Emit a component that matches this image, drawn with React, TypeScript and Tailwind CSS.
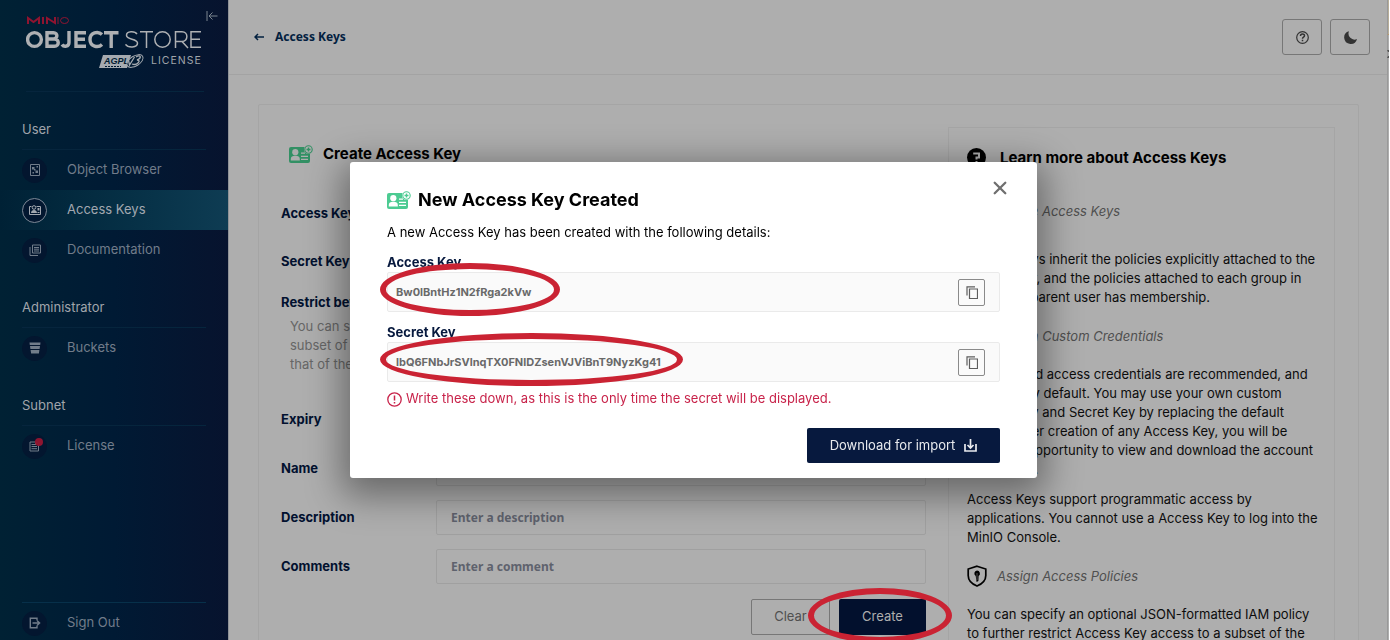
import React from "react";

function KeyCardIcon({ className, fill, bg }: { className: string; fill: string; bg: string }) {
  return (
    <svg className={className} viewBox="0 0 24 18" aria-hidden="true">
      <rect x="0" y="2" width="21" height="16" rx="2" fill={fill} />
      <circle cx="6.3" cy="7.2" r="3.1" fill={bg} />
      <path d="M1.800 15.600v-1.800c0-2 1.600-3 4.500-3s4.500 1 4.500 3v1.800z" fill={bg} />
      <path d="M12 8.200h4M12 11.300h7M12 14.400h7" stroke={bg} strokeWidth="1.300" />
      <circle cx="19.500" cy="4.500" r="4.500" fill={bg} />
      <circle cx="19.500" cy="4.500" r="3.700" fill="none" stroke={fill} strokeWidth="1.100" />
      <path d="M19.500 2.500v4M17.500 4.500h4" stroke={fill} strokeWidth="1.400" />
    </svg>
  );
}

function Logo() {
  return (
    <svg className="block h-[54px] w-[178px]" viewBox="0 0 178 54" role="img" aria-label="MinIO Object Store, AGPL v3 license">
      <g fill="none" stroke="#8f1430" strokeWidth="2">
        <path d="M2 8V2l5.500 4L13 2v6M17 1v7M21 8V2l8 5V1" />
        <path d="M32 1v7" strokeWidth="1" />
        <ellipse cx="38.500" cy="4.500" rx="4" ry="3" strokeWidth="1" />
      </g>
      <g fill="none" stroke="#aeb0b3" strokeWidth="3.400">
        <circle cx="8.500" cy="23.500" r="6.900" />
        <path d="M21 16.700h6.500c4.500 0 4.500 6.300 0 6.300H21h7.500c5 0 5 7.300 0 7.300H21V15" />
        <path d="M36 28.500c2 3 7 2.200 7-2V15M60 16.700H50v13.600h10M50 23.300h9M76 18.500c-4-3.800-12-2-12 5s8 8.800 12 5M78 16.700h14.500M85.200 16.700V32" />
      </g>
      <g fill="none" stroke="#aeb0b3" strokeWidth="1.500">
        <path d="M111 18c-2-3-10.500-3.200-10.500 1.300 0 5 11 2.700 11 7.700 0 5-9.500 5-12 1.300M114 15.700h13M120.500 15.700V32" />
        <circle cx="136.500" cy="23.500" r="7.700" />
        <path d="M149.500 32V15.700h6.500c6.500 0 6.500 9.800 0 9.800h-6.500M156 25.500l6 6.500M175 15.700h-10v15.600h10M165 23.300h9" />
      </g>
      <path d="M77 39h28l-4 13H73z" fill="#a5aab0" />
      <text x="78" y="48" fontSize="9" fontStyle="italic" fontWeight="700" fontFamily="Liberation Sans, sans-serif" fill="#001b33">AGPL</text>
      <ellipse cx="109" cy="45" rx="9" ry="5" transform="rotate(-32 109 45)" fill="#001a33" stroke="#a5aab0" />
      <path d="M102 42l1.500 7 5-8M110 41c5-3 6 1 1 3 5 0 0 6-5 4" fill="none" stroke="#a5aab0" strokeWidth="1.300" />
      <path d="M79 50.500h16" stroke="#001b33" strokeWidth="1" strokeDasharray="2 1" />
      <text x="125" y="48" fontSize="10.500" letterSpacing="1" fontFamily="Inter, sans-serif" fill="#a0a5ab">LICENSE</text>
    </svg>
  );
}

const icons: Record<string, React.ReactNode> = {
  browser: (
    <>
      <path d="M1.500.500h9v11h-9z" fill="none" stroke="currentColor" />
      <path d="M3 3h2.500v2.500H3zM6.500 6.500H9V9H6.500zM3.500 8H5v1.500H3.500zM7.500 2H9v1.500H7.500zM5 5h1.500v1.500H5z" fill="currentColor" />
    </>
  ),
  keys: (
    <>
      <path d="M2.500 2.500h-2v8h11v-8h-4" fill="none" stroke="currentColor" />
      <circle cx="5" cy="3.500" r="1.800" fill="none" stroke="currentColor" />
      <path d="M2 9c0-4 6-4 6 0zM8.500 4h2v2.500h-2zM8.500 8h2v1h-2z" fill="currentColor" />
    </>
  ),
  docs: (
    <path d="M3.500 1h8v8h-8zM1 3v8.500h8M5 3.500h5M5 5.200h5M5 7h5" fill="none" stroke="currentColor" />
  ),
  bucket: (
    <path d="M.5.500h11l-.3 2.500H.8zM1 4h10l-.4 3H1.400zM1.600 8h8.800l-.5 3.500H2.100z" fill="currentColor" />
  ),
  license: (
    <path d="M7 2H1v9h8.500V5M2.500 4.500h5M2.500 6.500h5.500M2.500 8.700h5.500M6 4l3-3" fill="none" stroke="currentColor" />
  ),
  signout: (
    <path d="M8 3.500V1.300H1.300v9.400H8V8.500M3.500 6h7M8.200 3.700 10.600 6 8.200 8.300" fill="none" stroke="currentColor" strokeWidth="1.400" />
  ),
};

function NavItem({ icon, label, active, dot }: { icon: string; label: string; active?: boolean; dot?: boolean }) {
  return (
    <a
      href="#"
      className={
        active
          ? "flex h-10 items-center gap-5 bg-linear-to-r from-[#002135] to-[#0e3c53] pl-[22px] text-[#a2a8b0]"
          : "flex h-10 items-center gap-5 pl-[22px] text-[#717c8a]"
      }
    >
      <span
        className={
          active
            ? "relative flex size-[25px] items-center justify-center rounded-full border border-[#7d8896] bg-[#021730]"
            : "relative flex size-[25px] items-center justify-center rounded-full bg-[#03162f]"
        }
      >
        <svg className="size-3" viewBox="0 0 12 12" aria-hidden="true">{icons[icon]}</svg>
        {dot && <span className="absolute top-1 right-1 size-2 rounded-full bg-[#8e1530]" />}
      </span>
      {label}
    </a>
  );
}

function NavGroup({ title, children }: { title: string; children: React.ReactNode }) {
  return (
    <div>
      <div className="px-[22px] pt-[27px]">
        <h2 className="h-[31px] border-b border-[#06253d] leading-5 text-[#a0a5ab]">{title}</h2>
      </div>
      {children}
    </div>
  );
}

function Sidebar() {
  return (
    <aside className="flex w-[229px] shrink-0 flex-col border-r border-[#8f9296] bg-linear-to-r from-[#002134] via-[#001a34] to-[#07132e] text-[13px]">
      <div className="relative pt-4 pr-6 pl-[26px]">
        <div className="h-[76px] border-b border-[#06253d]">
          <Logo />
        </div>
        <button aria-label="Collapse menu" className="absolute top-[11px] right-[10px] text-[#7b8590]">
          <svg className="block h-[10px] w-3" viewBox="0 0 12 10" fill="none" stroke="currentColor">
            <path d="M1 0v10M11.500 5H3M6.500 1.500 3 5l3.500 3.500" />
          </svg>
        </button>
      </div>
      <nav className="flex flex-1 flex-col">
        <NavGroup title="User">
          <NavItem icon="browser" label="Object Browser" />
          <NavItem icon="keys" label="Access Keys" active />
          <NavItem icon="docs" label="Documentation" />
        </NavGroup>
        <NavGroup title="Administrator">
          <NavItem icon="bucket" label="Buckets" />
        </NavGroup>
        <NavGroup title="Subnet">
          <NavItem icon="license" label="License" dot />
        </NavGroup>
        <div className="mt-auto -mb-[3px]">
          <div className="mx-[22px] border-t border-[#07304a]" />
          <NavItem icon="signout" label="Sign Out" />
        </div>
      </nav>
    </aside>
  );
}

function Row({ id, label, placeholder }: { id: string; label: string; placeholder?: string }) {
  return (
    <div className="flex items-center">
      <label htmlFor={id} className="w-[155px] shrink-0 font-bold text-[#02112f]">{label}</label>
      <input
        id={id}
        placeholder={placeholder}
        className="h-[35px] min-w-0 flex-1 rounded-xs border border-[#a0a0a0] bg-transparent px-[14px] font-[Noto_Sans,sans-serif] text-xs font-bold placeholder:text-[#5e626d]"
      />
    </div>
  );
}

function Ring({ className }: { className: string }) {
  return <span aria-hidden="true" className={`pointer-events-none absolute z-10 rounded-[50%] border-[6px] border-[#ca2333] ${className}`} />;
}

function HelpHeading({ children }: { children: React.ReactNode }) {
  return (
    <h3 className="flex h-[58px] items-center gap-[10px] text-[#505050] italic">
      <svg className="h-[22px] w-5 shrink-0 text-black" viewBox="0 0 20 22" aria-hidden="true">
        <path d="M10 1.200 18.800 4v6.500c0 5-3.800 8.500-8.800 10.500C5 19 1.200 15.500 1.200 10.500V4z" fill="none" stroke="currentColor" strokeWidth="1.700" />
        <path d="M10 5.500a3 3 0 0 1 1.600 5.500l-.2 5L9.600 17l-.9-6A3 3 0 0 1 10 5.500" fill="currentColor" />
        <path d="M10 8v7" stroke="#777" strokeWidth=".7" />
      </svg>
      {children}
    </h3>
  );
}

function CreateForm() {
  return (
    <form className="min-w-0 flex-1 pt-[15px]" onSubmit={(e) => e.preventDefault()}>
      <h1 className="flex h-6 items-center gap-[10px] pl-2 text-[15px] font-bold text-black">
        <KeyCardIcon className="h-[18px] w-6" fill="#329064" bg="#aeaeae" />
        Create Access Key
      </h1>
      <div className="mt-[30px] flex flex-col gap-[13px]">
        <Row id="access" label="Access Key" />
        <Row id="secret" label="Secret Key" />
      </div>
      <div className="mt-[13px]">
        <h2 className="leading-5 font-bold text-[#02112f]">Restrict beyond user policy</h2>
        <p className="mt-[5px] pl-[9px] leading-[19px] text-[#666]">
          You can specify an optional JSON-formatted IAM policy to further restrict Access Key access to a
          subset of the actions and resources explicitly allowed for the parent user. Additional access beyond
          that of the parent user cannot be implemented through these policies.
        </p>
      </div>
      <div className="mt-7 flex flex-col gap-[14px]">
        <Row id="expiry" label="Expiry" />
        <Row id="name" label="Name" placeholder="Enter a name" />
        <Row id="description" label="Description" placeholder="Enter a description" />
        <Row id="comments" label="Comments" placeholder="Enter a comment" />
      </div>
      <div className="mt-[15px] flex justify-end gap-[9px]">
        <button type="reset" className="h-[36px] w-[79px] rounded-xs border border-[#777] text-[#505050]">Clear</button>
        <div className="relative">
          <button type="submit" className="h-[36px] w-[87px] rounded-xs bg-[#02102d] text-[#aeaeae]">Create</button>
          <Ring className="-top-[11px] -left-[31px] h-[55px] w-[144px]" />
        </div>
      </div>
    </form>
  );
}

function HelpPanel() {
  return (
    <section className="w-[387px] shrink-0 border border-[#a5a5a5] pt-[17px] pr-[11px] pl-[18px] leading-[19px] text-[#0c0c0c]">
      <h2 className="flex h-6 items-center gap-[14px] text-[15px] font-bold text-black">
        <svg className="size-[19px]" viewBox="0 0 19 19" aria-hidden="true">
          <circle cx="9.500" cy="9.500" r="9.500" />
          <path d="M6.200 5.500h5.800v4H9.500v2M8.500 14h2" fill="none" stroke="#aeaeae" strokeWidth="2" />
        </svg>
        Learn more about Access Keys
      </h2>
      <div className="mt-[13px]">
        <HelpHeading>Create Access Keys</HelpHeading>
        <p className="mt-[10px]">
          Access Keys inherit the policies explicitly attached to the parent user, and the policies attached to
          each group in which the parent user has membership.
        </p>
        <HelpHeading>Assign Custom Credentials</HelpHeading>
        <p>
          Randomized access credentials are recommended, and provided by default. You may use your own custom
          Access Key and Secret Key by replacing the default values. After creation of any Access Key, you will be
          given the opportunity to view and download the account credentials.
        </p>
        <p className="mt-[11px]">
          Access Keys support programmatic access by applications. You cannot use a Access Key to log into the
          MinIO Console.
        </p>
        <HelpHeading>Assign Access Policies</HelpHeading>
        <p>
          You can specify an optional JSON-formatted IAM policy to further restrict Access Key access to a subset
          of the actions and resources explicitly allowed for the parent user.
        </p>
      </div>
    </section>
  );
}

function KeyField({ label, value, ring }: { label: string; value: string; ring: string }) {
  return (
    <div>
      <h3 className="h-5 leading-5 font-bold text-[#07193e]">{label}</h3>
      <div className="relative flex h-10 items-center justify-between rounded-xs border border-[#eaeaea] bg-[#fafafa] pr-[14px] pl-2">
        <span className="text-[11px] font-bold text-[#696969]">{value}</span>
        <button aria-label={`Copy ${label}`} className="flex size-[27px] items-center justify-center rounded-xs border border-[#8a8a8a] text-[#5e5e5e]">
          <svg className="h-[13px] w-3" viewBox="0 0 12 13" fill="none" stroke="currentColor">
            <path d="M3.500 3h8v9.500h-8zM1 9.500V.800h8" strokeWidth="1.200" />
          </svg>
        </button>
        <Ring className={ring} />
      </div>
    </div>
  );
}

function Dialog() {
  return (
    <div className="fixed inset-y-0 right-[3px] left-0 flex items-center justify-center">
      <div role="dialog" aria-modal="true" aria-labelledby="dialog-title" className="relative w-[687px] rounded-[3px] bg-white px-[37px] pt-[26px] pb-[15px] text-[13px] shadow-[0_10px_36px_8px_rgba(0,0,0,0.4)]">
        <h2 id="dialog-title" className="flex h-6 items-center gap-[7px] text-lg font-bold text-black">
          <KeyCardIcon className="h-[18px] w-6" fill="#4ccb92" bg="#ffffff" />
          New Access Key Created
        </h2>
        <button aria-label="Close" className="absolute top-[19px] right-[30px] text-[#6f6f6f]">
          <svg className="block size-[14px]" viewBox="0 0 14 14" stroke="currentColor" strokeWidth="2.300" strokeLinecap="round">
            <path d="M1.700 1.700 12.300 12.300M12.300 1.700 1.700 12.300" />
          </svg>
        </button>
        <p className="mt-[10px] leading-5 text-black">A new Access Key has been created with the following details:</p>
        <div className="mt-[10px] flex flex-col gap-[10px]">
          <KeyField label="Access Key" value="Bw0lBntHz1N2fRga2kVw" ring="-top-[10px] -left-[8px] h-[53px] w-[180px]" />
          <KeyField label="Secret Key" value="lbQ6FNbJrSVlnqTX0FNlDZsenVJViBnT9NyzKg41" ring="-top-[10px] -left-[8px] h-[53px] w-[303px]" />
        </div>
        <p className="mt-[7px] flex h-5 items-center gap-1 text-[#c8234a]">
          <svg className="size-[15px]" viewBox="0 0 15 15" fill="none" stroke="currentColor">
            <circle cx="7.500" cy="7.500" r="6.700" strokeWidth="1.300" />
            <path d="M7.500 3.500v5M7.500 10v1.500" strokeWidth="1.500" />
          </svg>
          Write these down, as this is the only time the secret will be displayed.
        </p>
        <div className="mt-[19px] flex justify-end">
          <button className="flex h-[35px] w-[193px] items-center justify-center gap-[9px] rounded-xs bg-[#07193e] text-[#e8eaee]">
            Download for import
            <svg className="size-[13px]" viewBox="0 0 13 13" fill="none" stroke="currentColor" strokeWidth="1.700">
              <path d="M1 5v7h11V5M6.500 0v9M3.500 6l3 3 3-3" />
            </svg>
          </button>
        </div>
      </div>
    </div>
  );
}

export default function App() {
  return (
    <div className="flex h-screen overflow-hidden bg-[#aeaeae] font-[Inter,sans-serif] text-[13px]">
      <Sidebar />
      <div className="flex min-w-0 flex-1 flex-col overflow-hidden">
        <header className="flex h-[75px] shrink-0 items-center justify-between border-b border-[#a3a3a3] pr-[17px] pl-[25px]">
          <a href="#" className="flex items-center gap-[11px] font-[Noto_Sans,sans-serif] text-xs font-bold text-[#02203f]">
            <svg className="h-2 w-[10px]" viewBox="0 0 10 8" fill="none" stroke="currentColor" strokeWidth="1.500">
              <path d="M10 4H1M4 1 1 4l3 3" />
            </svg>
            Access Keys
          </a>
          <div className="flex gap-2">
            <button aria-label="Help" className="flex h-9 w-10 items-center justify-center rounded-[3px] border border-[#777] text-[#333]">
              <svg className="size-[13px]" viewBox="0 0 13 13" fill="none" stroke="currentColor">
                <circle cx="6.500" cy="6.500" r="5.800" strokeWidth="1.200" />
                <path d="M4.500 5c0-2.600 4-2.600 4-.2 0 1.500-2 1.300-2 2.900M6.500 8.800v1.400" strokeWidth="1.500" />
              </svg>
            </button>
            <button aria-label="Dark mode" className="flex h-9 w-10 items-center justify-center rounded-[3px] border border-[#777] text-[#333]">
              <svg className="size-[13px]" viewBox="0 0 13 13" fill="currentColor">
                <path d="M5 .200A6.500 6.500 0 1 0 13 8 6 6 0 0 1 5 .200" />
              </svg>
            </button>
          </div>
        </header>
        <main className="pt-[29px] pr-7 pl-[29px]">
          <div className="flex gap-[22px] rounded-xs border border-[#a5a5a5] pt-[22px] pr-[23px] pl-[22px]">
            <CreateForm />
            <HelpPanel />
          </div>
        </main>
      </div>
      <div className="flex w-[3px] shrink-0 flex-col border-r border-white">
        <div className="h-[35px] border-b border-l border-[#b79a70] border-l-[#999] bg-[#b8ae98]" />
        <div className="h-[15px] border-l border-[#999]" />
        <div className="h-2 border-y-2 border-l border-y-[#555] border-l-[#999]" />
        <div className="flex-1 border-l border-[#999]" />
      </div>
      <Dialog />
    </div>
  );
}
